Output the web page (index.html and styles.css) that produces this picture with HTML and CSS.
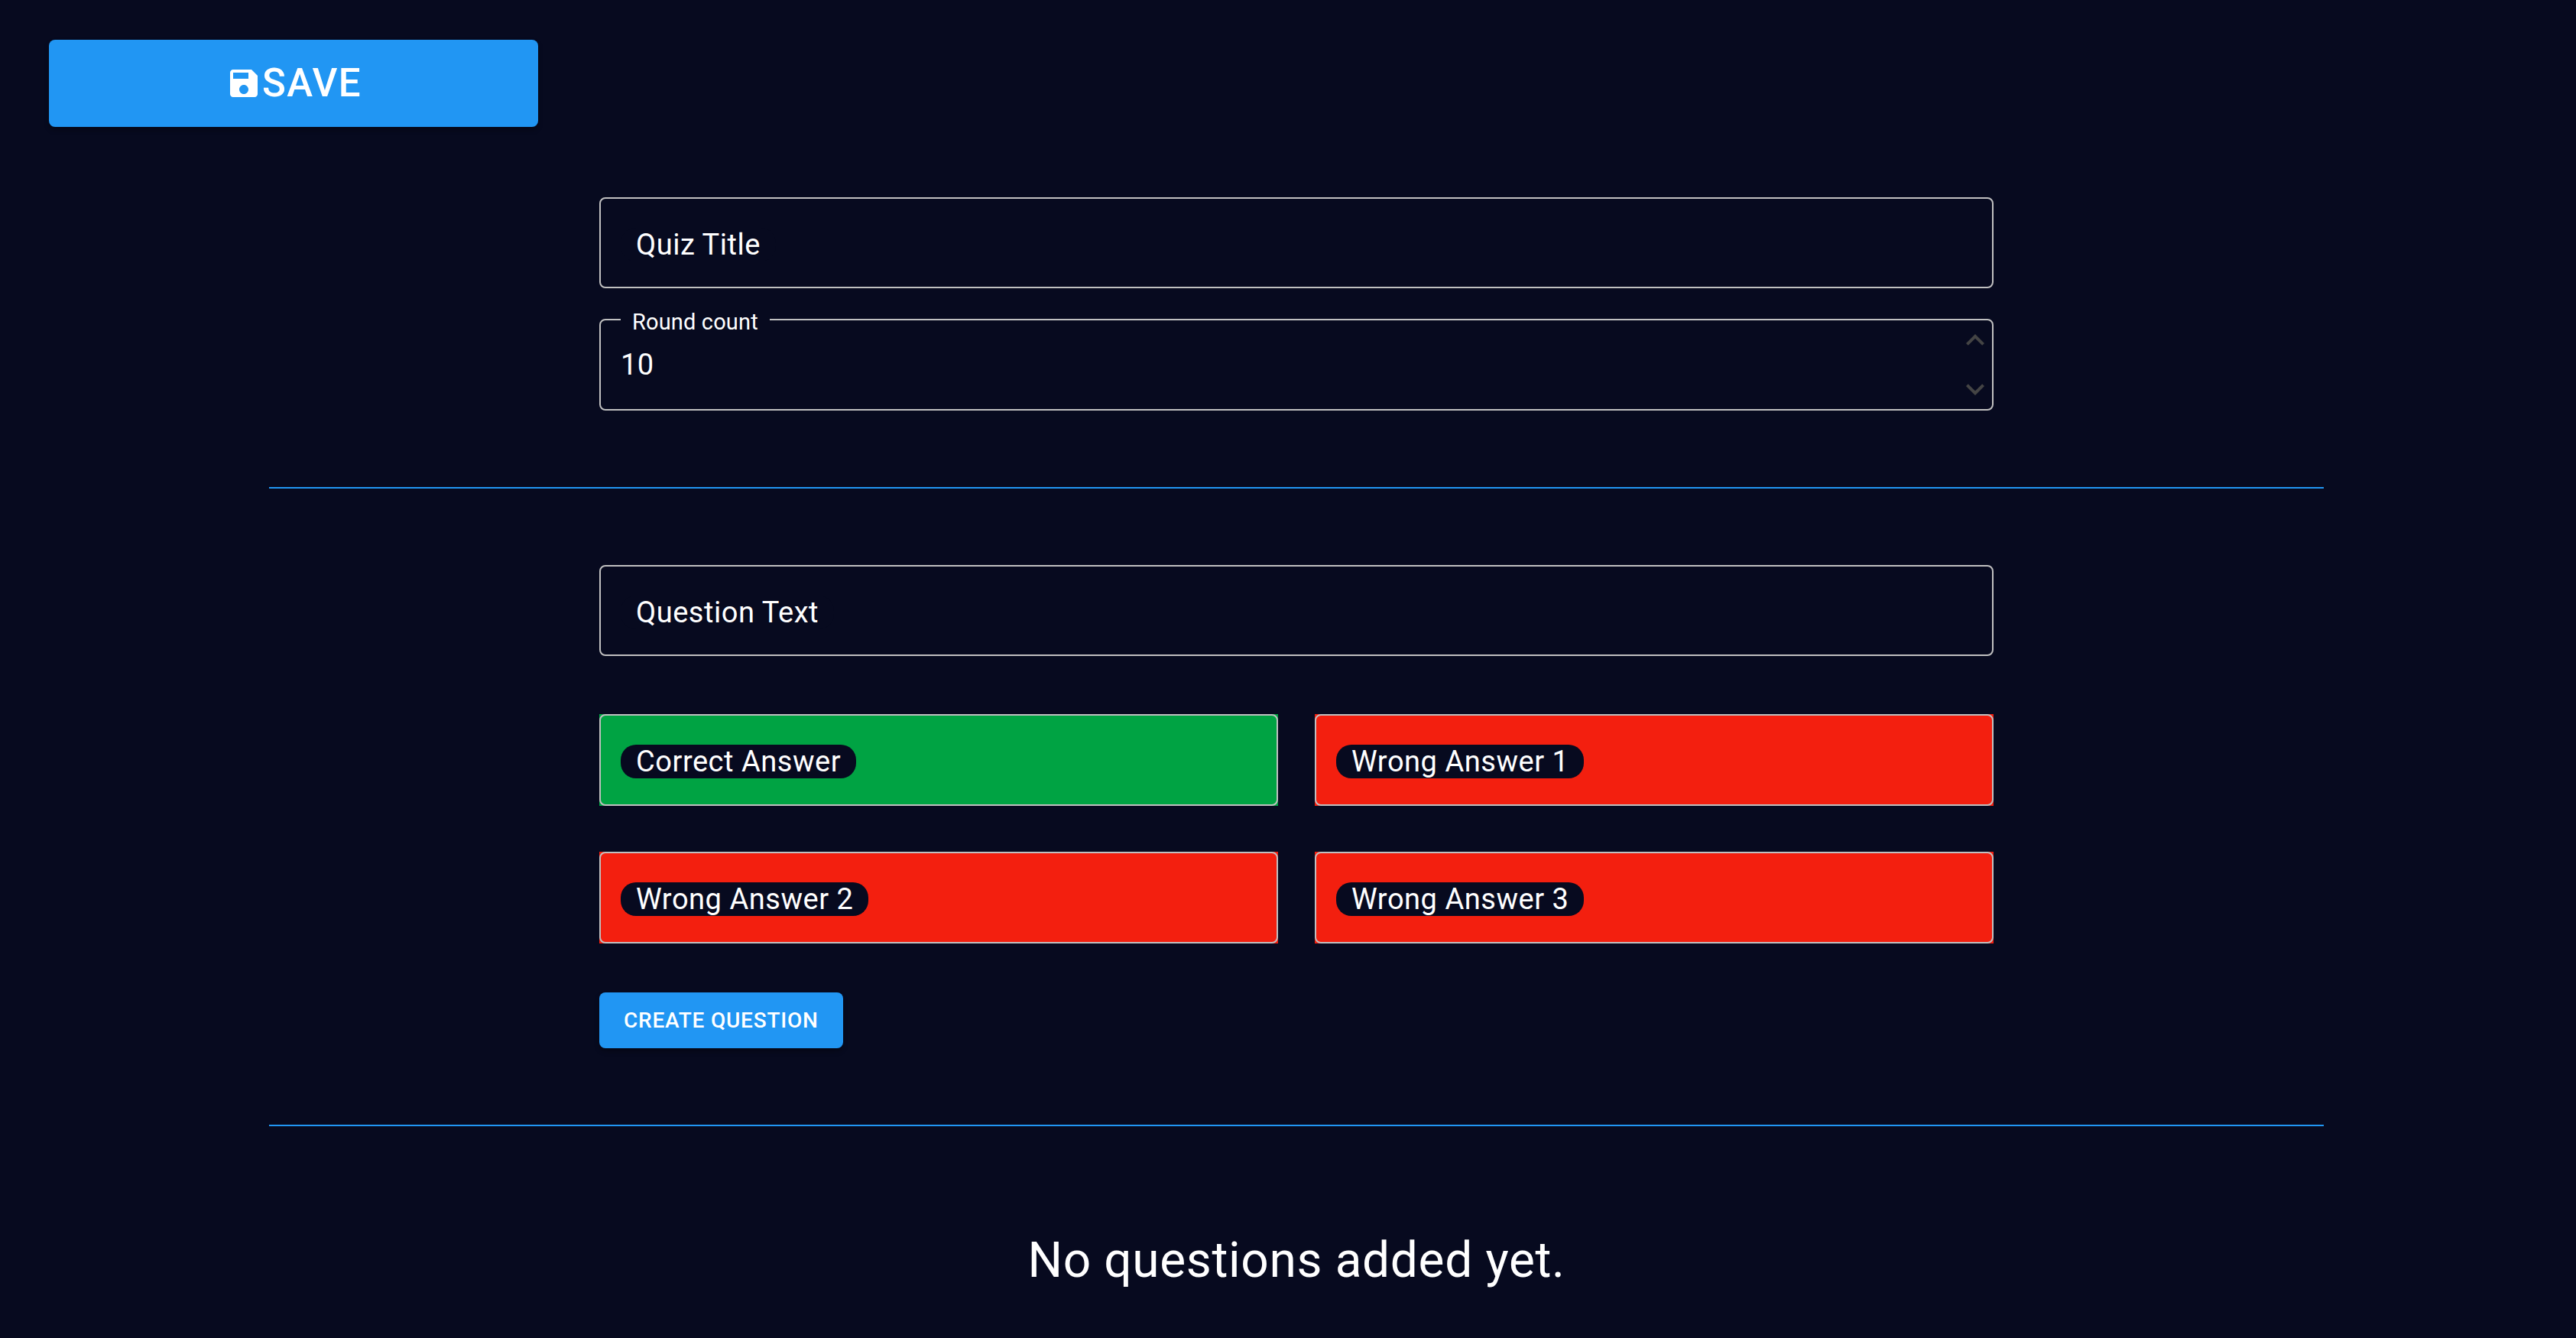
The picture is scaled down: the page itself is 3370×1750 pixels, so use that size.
FILE: index.html
```html
<!DOCTYPE html>
<html lang="en">
<head>
  <meta charset="utf-8">
  <meta name="viewport" content="width=device-width, initial-scale=1">
  <title>Create Quiz</title>
  <link rel="stylesheet" href="styles.css">
</head>
<body>
  <header class="toolbar">
    <button class="button button--save" type="button">
      <svg class="icon" viewBox="0 0 24 24" aria-hidden="true"><path d="M17 3H5c-1.110 0-2 .9-2 2v14c0 1.100.890 2 2 2h14c1.100 0 2-.9 2-2V7l-4-4zm-5 16c-1.660 0-3-1.340-3-3s1.340-3 3-3 3 1.340 3 3-1.340 3-3 3zm3-10H5V5h10v4z"/></svg>
      <span>Save</span>
    </button>
  </header>

  <main class="page">
    <section class="form form--quiz">
      <div class="field">
        <input class="field__input" id="quiz-title" type="text">
        <label class="field__label" for="quiz-title">Quiz Title</label>
      </div>
      <div class="field">
        <input class="field__input field__input--tall" id="round-count" type="number" value="10">
        <label class="field__label field__label--raised" for="round-count">Round count</label>
        <div class="stepper">
          <button class="stepper__button" type="button" aria-label="Increase">
            <svg class="icon" viewBox="0 0 24 24" aria-hidden="true"><path d="M7.410 15.410L12 10.830l4.590 4.580L18 14l-6-6-6 6z"/></svg>
          </button>
          <button class="stepper__button" type="button" aria-label="Decrease">
            <svg class="icon" viewBox="0 0 24 24" aria-hidden="true"><path d="M7.410 8.590L12 13.170l4.590-4.580L18 10l-6 6-6-6z"/></svg>
          </button>
        </div>
      </div>
    </section>

    <hr class="divider">

    <form class="form">
      <div class="field">
        <input class="field__input" id="question-text" type="text">
        <label class="field__label" for="question-text">Question Text</label>
      </div>
      <div class="answers">
        <div class="answer answer--correct">
          <div class="field">
            <input class="field__input field__input--tall" id="correct-answer" type="text">
            <label class="field__label" for="correct-answer">Correct Answer</label>
          </div>
        </div>
        <div class="answer answer--wrong">
          <div class="field">
            <input class="field__input field__input--tall" id="wrong-answer-1" type="text">
            <label class="field__label" for="wrong-answer-1">Wrong Answer 1</label>
          </div>
        </div>
        <div class="answer answer--wrong">
          <div class="field">
            <input class="field__input field__input--tall" id="wrong-answer-2" type="text">
            <label class="field__label" for="wrong-answer-2">Wrong Answer 2</label>
          </div>
        </div>
        <div class="answer answer--wrong">
          <div class="field">
            <input class="field__input field__input--tall" id="wrong-answer-3" type="text">
            <label class="field__label" for="wrong-answer-3">Wrong Answer 3</label>
          </div>
        </div>
      </div>
      <button class="button" type="button">Create question</button>
    </form>

    <hr class="divider">

    <p class="empty">No questions added yet.</p>
  </main>
</body>
</html>
```

FILE: styles.css
```css
:root {
  --page: #070a1f;
  --primary: #2196f3;
  --outline: #c0c0c0;
  --correct: #00a343;
  --wrong: #f31f0f;
}

* {
  box-sizing: border-box;
}

body {
  margin: 0;
  background: var(--page);
  color: #fff;
  font-family: Roboto, "Liberation Sans", sans-serif;
  font-size: 38px;
}

.toolbar {
  padding: 52px 64px 0;
}

.page {
  display: flex;
  flex-direction: column;
  align-items: center;
  padding: 92px 0 60px 22px;
}

.icon {
  display: block;
  width: 48px;
  height: 48px;
  fill: currentColor;
}

.button {
  display: inline-flex;
  align-items: center;
  justify-content: center;
  padding: 12px 32px;
  border: 0;
  border-radius: 8px;
  background: var(--primary);
  color: #fff;
  font: 500 28px/49px Roboto, "Liberation Sans", sans-serif;
  letter-spacing: 0.028em;
  text-transform: uppercase;
  box-shadow: 0 4px 6px rgba(0, 0, 0, 0.3);
  cursor: pointer;
}

.button--save {
  width: 100%;
  max-width: 640px;
  font-size: 51px;
  line-height: 90px;
}

.form {
  display: flex;
  flex-direction: column;
  align-items: flex-start;
  width: 100%;
  max-width: 1824px;
}

.form--quiz {
  gap: 40px;
}

.field {
  position: relative;
  display: flex;
  width: 100%;
  border: 2px solid var(--outline);
  border-radius: 8px;
}

.field__input {
  flex: 1;
  min-width: 0;
  height: 115px;
  padding: 0 26px;
  border: 0;
  outline: 0;
  background: transparent;
  color: #fff;
  font: inherit;
  letter-spacing: 0.01em;
  appearance: textfield;
}

.field__input--tall {
  height: 116px;
}

.field__input::-webkit-inner-spin-button {
  appearance: none;
}

/* Labels lie over the input or over its top border. */
.field__label {
  position: absolute;
  top: 38px;
  left: 26px;
  padding: 0 20px;
  border-radius: 20px;
  background: var(--page);
  line-height: 44px;
  letter-spacing: 0.014em;
  white-space: nowrap;
}

.field__label--raised {
  top: -19px;
  padding: 0 15px;
  border-radius: 0;
  font-size: 29px;
  line-height: 42px;
  letter-spacing: 0.005em;
}

.stepper {
  display: flex;
  flex-direction: column;
  justify-content: space-between;
  padding: 2px 0;
}

.stepper__button {
  width: 46px;
  padding: 0;
  border: 0;
  background: transparent;
  color: #444;
}

.divider {
  width: 100%;
  max-width: 2688px;
  height: 2px;
  margin: 100px 0;
  border: 0;
  background: var(--primary);
}

.answers {
  display: grid;
  grid-template-columns: 1fr 1fr;
  gap: 60px 48px;
  width: 100%;
  margin: 76px 0 64px;
}

.answer--correct {
  background: var(--correct);
}

.answer--wrong {
  background: var(--wrong);
}

.empty {
  margin: 36px 0 0;
  font-size: 64px;
  line-height: 80px;
  letter-spacing: 0.01em;
  text-align: center;
}
```
